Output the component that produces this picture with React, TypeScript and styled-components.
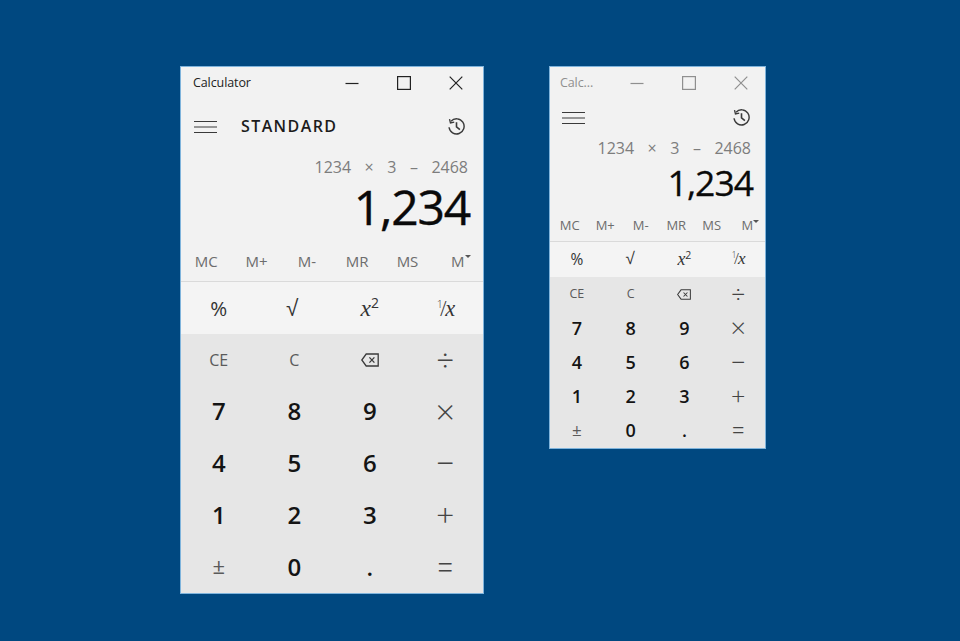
import React from "react";
import styled, { createGlobalStyle } from "styled-components";

type V = { $small?: boolean };

const Global = createGlobalStyle`
  html, body { margin: 0; padding: 0; height: 100%; background: #004880; }
  body { font-family: "Open Sans", "Noto Sans", sans-serif; color: #111; }
`;

const Desktop = styled.div`
  width: 960px;
  height: 641px;
  box-sizing: border-box;
  padding: 66px 0 0 180px;
  display: flex;
  align-items: flex-start;
  gap: 65px;
  overflow: hidden;
`;

const Win = styled.section<V>`
  width: ${(p) => (p.$small ? 217 : 304)}px;
  height: ${(p) => (p.$small ? 383 : 528)}px;
  box-sizing: border-box;
  border: 1px solid #7fb4dc;
  background: #f2f2f2;
  display: flex;
  flex-direction: column;
`;

const TitleBar = styled.header<V>`
  height: 31px;
  flex: none;
  display: flex;
  align-items: center;
  padding-left: ${(p) => (p.$small ? 10 : 12)}px;
`;

const TitleText = styled.span<V>`
  flex: 1;
  font-size: 12.5px;
  letter-spacing: -0.1px;
  color: ${(p) => (p.$small ? "#8f8f8f" : "#222")};
`;

const WinButton = styled.div<V>`
  width: 52px;
  height: 30px;
  display: flex;
  align-items: center;
  justify-content: center;
  color: ${(p) => (p.$small ? "#8f8f8f" : "#222")};
`;

const WinButtons = styled.div<V>`
  display: flex;
  margin-right: ${(p) => (p.$small ? -2 : 1)}px;
`;

const Header = styled.div<V>`
  height: ${(p) => (p.$small ? 39 : 57)}px;
  flex: none;
  display: flex;
  align-items: center;
  padding: ${(p) => (p.$small ? "0 15px 0 12px" : "0 18px 0 13px")};
  box-sizing: border-box;
`;

const ModeTitle = styled.h1`
  flex: 1;
  margin: 0 0 0 24px;
  padding-bottom: 1px;
  font-size: 16px;
  font-weight: 600;
  letter-spacing: 1.4px;
  color: #1c1c1c;
`;

const Spacer = styled.div`
  flex: 1;
`;

const Expression = styled.div<V>`
  flex: none;
  height: ${(p) => (p.$small ? 24 : 25)}px;
  box-sizing: border-box;
  display: flex;
  justify-content: flex-end;
  align-items: center;
  gap: 13.5px;
  padding: 0 ${(p) => (p.$small ? 14 : 15)}px 2px 0;
  font-size: 16px;
  line-height: 1;
  color: #7d7d7d;
`;

const Result = styled.div<V>`
  flex: none;
  height: ${(p) => (p.$small ? 48 : 59)}px;
  box-sizing: border-box;
  display: flex;
  justify-content: flex-end;
  align-items: center;
  padding: 0 ${(p) => (p.$small ? 12 : 13)}px ${(p) => (p.$small ? 5 : 6)}px 0;
  font-size: ${(p) => (p.$small ? 35.5 : 48)}px;
  line-height: 1;
  font-weight: 500;
  -webkit-text-stroke: ${(p) => (p.$small ? 0.3 : 0.4)}px #0a0a0a;
  letter-spacing: ${(p) => (p.$small ? -1 : -1.2)}px;
  color: #0a0a0a;
`;

const MemoryRow = styled.div<V>`
  flex: none;
  height: ${(p) => (p.$small ? 33 : 43)}px;
  display: grid;
  grid-template-columns: repeat(6, 1fr);
  align-items: center;
  justify-items: center;
  padding: ${(p) => (p.$small ? "0 0 0 2px" : "2px 0 0")};
  box-sizing: border-box;
  font-size: ${(p) => (p.$small ? 13 : 15)}px;
  font-weight: 500;
  color: #6d6d6d;
  border-bottom: 1px solid #dadada;
`;

const MemoryKey = styled.span`
  position: relative;
`;

const Caret = styled.span`
  position: absolute;
  right: -6px;
  top: 4px;
  width: 0;
  height: 0;
  border-left: 3px solid transparent;
  border-right: 3px solid transparent;
  border-top: 3px solid #555;
`;

const SciRow = styled.div<V>`
  flex: none;
  height: ${(p) => (p.$small ? 35 : 52)}px;
  box-sizing: border-box;
  padding-bottom: ${(p) => (p.$small ? 2 : 0)}px;
  display: grid;
  grid-template-columns: repeat(4, 1fr);
  align-items: center;
  justify-items: center;
  background: #f4f4f4;
  font-size: ${(p) => (p.$small ? 15.5 : 20.5)}px;
  color: #333;
`;

const Italic = styled.i`
  font-family: "Liberation Serif", serif;
  font-size: 1.15em;
`;

const Sup = styled.sup`
  font-size: 0.68em;
  font-family: "Open Sans", sans-serif;
  line-height: 0;
  vertical-align: 0.55em;
`;

const OneOver = styled.span`
  font-weight: 300;
  letter-spacing: -0.07em;
  font-size: 0.95em;
`;

const Unit = styled(Sup)`
  font-size: 0.55em;
  vertical-align: 0.7em;
  margin-right: -0.15em;
`;

const Root = styled.span<V>`
  font-family: "DejaVu Sans", sans-serif;
  font-weight: 300;
  font-size: 1.1em;
  margin-right: ${(p) => (p.$small ? 1 : 4)}px;
`;

const Keypad = styled.div<V>`
  flex: 1;
  display: grid;
  grid-template-columns: repeat(4, 1fr);
  grid-auto-rows: 1fr;
  align-items: center;
  justify-items: center;
  background: #e6e6e6;
`;

const Digit = styled.div<V>`
  font-size: ${(p) => (p.$small ? 18 : 24)}px;
  font-weight: 600;
  color: #141414;
  line-height: 1;
  padding-bottom: 1px;
`;

const Fn = styled.div<V>`
  font-size: ${(p) => (p.$small ? 12.5 : 16)}px;
  color: #5a5a5a;
  line-height: 1;
`;

const PlusMinus = styled(Fn)<V>`
  font-size: ${(p) => (p.$small ? 17 : 22)}px;
  padding-bottom: ${(p) => (p.$small ? 2 : 4)}px;
`;

const Op = styled.div<V>`
  font-family: "Inter", sans-serif;
  font-weight: 200;
  font-size: ${(p) => (p.$small ? 27 : 34)}px;
  color: #444;
  line-height: 1;
  padding-bottom: 4px;
`;

const IconSvg = styled.svg`
  display: block;
  fill: none;
  stroke: currentColor;
`;

const DarkIcon = styled(IconSvg)`
  color: #3a3a3a;
`;

const Minimize = () => (
  <IconSvg width="14" height="14" viewBox="0 0 14 14" strokeWidth="1.2"><path d="M0.5 7.5H13.5" /></IconSvg>
);
const Maximize = () => (
  <IconSvg width="14" height="14" viewBox="0 0 14 14" strokeWidth="1.2"><rect x="0.6" y="0.6" width="12.8" height="12.8" /></IconSvg>
);
const Close = () => (
  <IconSvg width="14" height="14" viewBox="0 0 14 14" strokeWidth="1.2"><path d="M0.7 0.7L13.3 13.3M13.3 0.7L0.7 13.3" /></IconSvg>
);
const Menu = () => (
  <DarkIcon width="23" height="14" viewBox="0 0 23 14" strokeWidth="1.2"><path d="M0 1.5H23M0 7H23M0 12.5H23" /></DarkIcon>
);
const History = () => (
  <DarkIcon width="17" height="17" viewBox="0 0 18 18" strokeWidth="1.5">
    <path d="M3.2 3.4A8 8 0 1 1 1.1 9.8" />
    <path d="M1.6 1.2L2.6 5.2L6.6 4.4" strokeWidth="1.4" />
    <path d="M9 4.5V9.3L12.6 12.2" strokeWidth="1.7" />
  </DarkIcon>
);
const Backspace = ({ small }: { small?: boolean }) => (
  <DarkIcon width={small ? 14 : 18} height={small ? 11 : 14} viewBox="0 0 18 14" strokeWidth="1.3">
    <path d="M5.2 1H17.2V13H5.2L0.8 7Z" />
    <path d="M8.4 4.4L13.4 9.6M13.4 4.4L8.4 9.6" />
  </DarkIcon>
);

const Calculator = ({ small }: { small?: boolean }) => (
  <Win $small={small}>
    <TitleBar $small={small}>
      <TitleText $small={small}>{small ? "Calc..." : "Calculator"}</TitleText>
      <WinButtons $small={small}>
        <WinButton $small={small}><Minimize /></WinButton>
        <WinButton $small={small}><Maximize /></WinButton>
        <WinButton $small={small}><Close /></WinButton>
      </WinButtons>
    </TitleBar>
    <Header $small={small}>
      <Menu />
      {small ? <Spacer /> : <ModeTitle>STANDARD</ModeTitle>}
      <History />
    </Header>
    <Expression $small={small}>
      <span>1234</span><span>×</span><span>3</span><span>–</span><span>2468</span>
    </Expression>
    <Result $small={small}>1,234</Result>
    <MemoryRow $small={small}>
      <MemoryKey>MC</MemoryKey>
      <MemoryKey>M+</MemoryKey>
      <MemoryKey>M-</MemoryKey>
      <MemoryKey>MR</MemoryKey>
      <MemoryKey>MS</MemoryKey>
      <MemoryKey>M<Caret /></MemoryKey>
    </MemoryRow>
    <SciRow $small={small}>
      <span>%</span>
      <Root $small={small}>√</Root>
      <span><Italic>x</Italic><Sup>2</Sup></span>
      <OneOver><Unit>1</Unit>/<Italic>x</Italic></OneOver>
    </SciRow>
    <Keypad $small={small}>
      <Fn $small={small}>CE</Fn>
      <Fn $small={small}>C</Fn>
      <Backspace small={small} />
      <Op $small={small}>÷</Op>
      <Digit $small={small}>7</Digit>
      <Digit $small={small}>8</Digit>
      <Digit $small={small}>9</Digit>
      <Op $small={small}>×</Op>
      <Digit $small={small}>4</Digit>
      <Digit $small={small}>5</Digit>
      <Digit $small={small}>6</Digit>
      <Op $small={small}>−</Op>
      <Digit $small={small}>1</Digit>
      <Digit $small={small}>2</Digit>
      <Digit $small={small}>3</Digit>
      <Op $small={small}>+</Op>
      <PlusMinus $small={small}>±</PlusMinus>
      <Digit $small={small}>0</Digit>
      <Digit $small={small}>.</Digit>
      <Op $small={small}>=</Op>
    </Keypad>
  </Win>
);

export default function App() {
  return (
    <Desktop>
      <Global />
      <Calculator />
      <Calculator small />
    </Desktop>
  );
}
